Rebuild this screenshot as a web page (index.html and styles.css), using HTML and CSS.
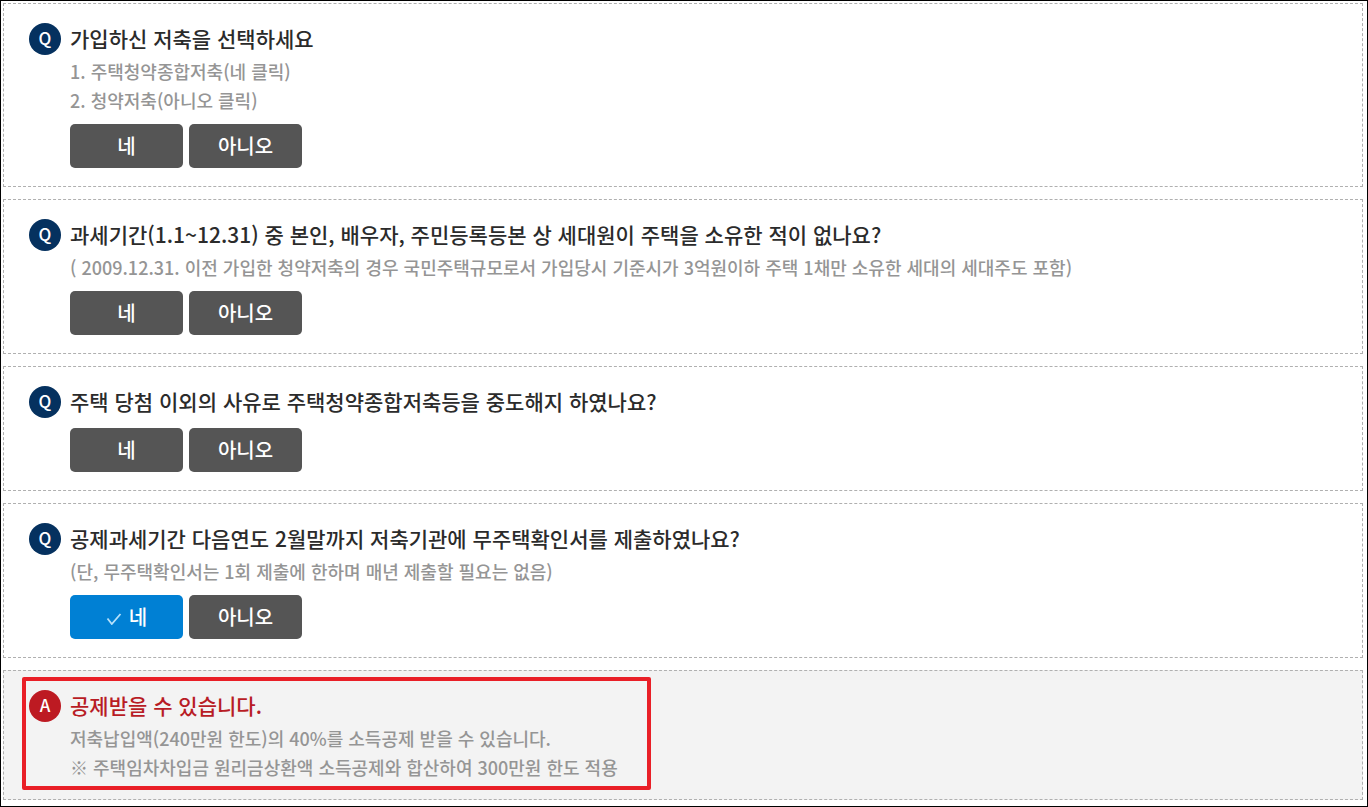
FILE: index.html
```html
<!DOCTYPE html>
<html lang="ko">
<head>
<meta charset="utf-8">
<title>주택청약저축 소득공제</title>
<link rel="stylesheet" href="styles.css">
</head>
<body>
<main class="survey">
  <section class="card">
    <span class="badge">Q</span>
    <div class="content">
      <h2 class="title">가입하신 저축을 선택하세요</h2>
      <p class="note">1. 주택청약종합저축(네 클릭)<br>2. 청약저축(아니오 클릭)</p>
      <div class="answers"><button class="answer" type="button">네</button><button class="answer" type="button">아니오</button></div>
    </div>
  </section>
  <section class="card">
    <span class="badge">Q</span>
    <div class="content">
      <h2 class="title">과세기간(1.1~12.31) 중 본인, 배우자, 주민등록등본 상 세대원이 주택을 소유한 적이 없나요?</h2>
      <p class="note">( 2009.12.31. 이전 가입한 청약저축의 경우 국민주택규모로서 가입당시 기준시가 3억원이하 주택 1채만 소유한 세대의 세대주도 포함)</p>
      <div class="answers"><button class="answer" type="button">네</button><button class="answer" type="button">아니오</button></div>
    </div>
  </section>
  <section class="card">
    <span class="badge">Q</span>
    <div class="content">
      <h2 class="title">주택 당첨 이외의 사유로 주택청약종합저축등을 중도해지 하였나요?</h2>
      <div class="answers"><button class="answer" type="button">네</button><button class="answer" type="button">아니오</button></div>
    </div>
  </section>
  <section class="card">
    <span class="badge">Q</span>
    <div class="content">
      <h2 class="title">공제과세기간 다음연도 2월말까지 저축기관에 무주택확인서를 제출하였나요?</h2>
      <p class="note">(단, 무주택확인서는 1회 제출에 한하며 매년 제출할 필요는 없음)</p>
      <div class="answers"><button class="answer selected" type="button"><svg class="check" viewBox="0 0 16 16" aria-hidden="true"><path d="M1.5 9.5 5.8 15 14.5 5"/></svg>네</button><button class="answer" type="button">아니오</button></div>
    </div>
  </section>
  <section class="card result">
    <div class="highlight">
      <span class="badge">A</span>
      <div class="content">
        <h2 class="title">공제받을 수 있습니다.</h2>
        <p class="note">저축납입액(240만원 한도)의 40%를 소득공제 받을 수 있습니다.<br>※ 주택임차차입금 원리금상환액 소득공제와 합산하여 300만원 한도 적용</p>
      </div>
    </div>
  </section>
</main>
</body>
</html>
```
FILE: styles.css
```css
* { box-sizing: border-box; }
body {
  margin: 0;
  font-family: "Noto Sans CJK KR", sans-serif;
  color: #2b2b2b;
}
.survey {
  display: flex;
  flex-direction: column;
  gap: 12px;
  min-height: 100vh;
  padding: 2px 4px 6px 2px;
  border: 1px solid #000;
}
.card {
  display: flex;
  align-items: flex-start;
  gap: 9px;
  padding: 19px 25px 18px;
  border: 1px dashed #b0b0b0;
}
.badge {
  display: flex;
  flex: none;
  align-items: center;
  justify-content: center;
  width: 32px;
  height: 32px;
  border-radius: 50%;
  background: #05315f;
  color: #fff;
  font-size: 17px;
  font-weight: 500;
  line-height: 30px;
  padding-bottom: 2px;
}
.title {
  margin: 0;
  font-size: 21px;
  font-weight: 500;
  line-height: 30px;
}
.note {
  margin: 4px 0 0;
  color: #959595;
  font-size: 18px;
  font-weight: 500;
  line-height: 29px;
}
.answers {
  display: flex;
  gap: 6px;
  margin-top: 9px;
}
.title + .answers { margin-top: 12px; }
.answer {
  display: flex;
  align-items: center;
  justify-content: center;
  gap: 7px;
  width: 113px;
  height: 44px;
  padding: 0;
  border: 0;
  border-radius: 5px;
  background: #555;
  color: #fff;
  font: 500 20px/28px "Noto Sans CJK KR", sans-serif;
}
.selected { background: #0080d4; }
.check {
  width: 16px;
  height: 16px;
  fill: none;
  stroke: #b5e0fa;
  stroke-width: 1.8;
}
.result {
  padding: 6px 18px 9px;
  background: #f3f3f3;
}
.result .badge { background: #bd1a22; }
.result .title { color: #b81c25; }
.highlight {
  display: flex;
  gap: 9px;
  padding: 9px 29px 4px 3px;
  border: 4px solid #e91f27;
  border-radius: 2px;
}
```
